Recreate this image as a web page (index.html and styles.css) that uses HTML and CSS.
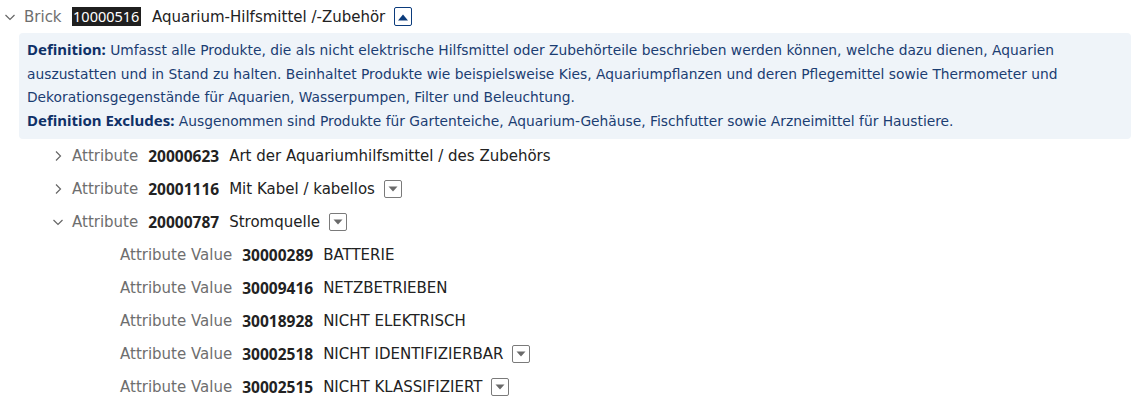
FILE: index.html
```html
<!DOCTYPE html>
<html lang="de">
<head>
<meta charset="utf-8">
<link rel="stylesheet" href="styles.css">
</head>
<body>
<div class="tree">
  <div class="row brick-row">
    <span class="chev"><svg width="12" height="12" viewBox="0 0 12 12"><path d="M1.5 4 L6 8.5 L10.5 4" fill="none" stroke="#666" stroke-width="1.2"/></svg></span>
    <span class="label">Brick</span>
    <mark class="hl">10000516</mark>
    <span class="name">Aquarium-Hilfsmittel /-Zubehör</span>
    <span class="btn btn-up"><svg width="12" height="8" viewBox="0 0 12 8"><path d="M1 7.5 L6 1.5 L11 7.5 Z" fill="#0b3b7c"/></svg></span>
  </div>
  <div class="def">
    <p><b>Definition:</b> Umfasst alle Produkte, die als nicht elektrische Hilfsmittel oder Zubehörteile beschrieben werden können, welche dazu dienen, Aquarien auszustatten und in Stand zu halten. Beinhaltet Produkte wie beispielsweise Kies, Aquariumpflanzen und deren Pflegemittel sowie Thermometer und Dekorationsgegenstände für Aquarien, Wasserpumpen, Filter und Beleuchtung.</p>
    <p><b>Definition Excludes:</b> Ausgenommen sind Produkte für Gartenteiche, Aquarium-Gehäuse, Fischfutter sowie Arzneimittel für Haustiere.</p>
  </div>
  <div class="row attr-row">
    <span class="chev"><svg width="12" height="12" viewBox="0 0 12 12"><path d="M4 1.5 L8.5 6 L4 10.5" fill="none" stroke="#666" stroke-width="1.2"/></svg></span>
    <span class="label">Attribute</span>
    <span class="code">20000623</span>
    <span class="name">Art der Aquariumhilfsmittel / des Zubehörs</span>
  </div>
  <div class="row attr-row">
    <span class="chev"><svg width="12" height="12" viewBox="0 0 12 12"><path d="M4 1.5 L8.5 6 L4 10.5" fill="none" stroke="#666" stroke-width="1.2"/></svg></span>
    <span class="label">Attribute</span>
    <span class="code">20001116</span>
    <span class="name">Mit Kabel / kabellos</span>
    <span class="btn btn-down"><svg width="12" height="8" viewBox="0 0 12 8"><path d="M1.5 1.5 L10.5 1.5 L6 6.5 Z" fill="#6a6a6a"/></svg></span>
  </div>
  <div class="row attr-row">
    <span class="chev"><svg width="12" height="12" viewBox="0 0 12 12"><path d="M1.5 4 L6 8.5 L10.5 4" fill="none" stroke="#666" stroke-width="1.2"/></svg></span>
    <span class="label">Attribute</span>
    <span class="code">20000787</span>
    <span class="name">Stromquelle</span>
    <span class="btn btn-down"><svg width="12" height="8" viewBox="0 0 12 8"><path d="M1.5 1.5 L10.5 1.5 L6 6.5 Z" fill="#6a6a6a"/></svg></span>
  </div>
  <div class="row val-row">
    <span class="label">Attribute Value</span>
    <span class="code">30000289</span>
    <span class="name">BATTERIE</span>
  </div>
  <div class="row val-row">
    <span class="label">Attribute Value</span>
    <span class="code">30009416</span>
    <span class="name">NETZBETRIEBEN</span>
  </div>
  <div class="row val-row">
    <span class="label">Attribute Value</span>
    <span class="code">30018928</span>
    <span class="name">NICHT ELEKTRISCH</span>
  </div>
  <div class="row val-row">
    <span class="label">Attribute Value</span>
    <span class="code">30002518</span>
    <span class="name">NICHT IDENTIFIZIERBAR</span>
    <span class="btn btn-down"><svg width="12" height="8" viewBox="0 0 12 8"><path d="M1.5 1.5 L10.5 1.5 L6 6.5 Z" fill="#6a6a6a"/></svg></span>
  </div>
  <div class="row val-row">
    <span class="label">Attribute Value</span>
    <span class="code">30002515</span>
    <span class="name">NICHT KLASSIFIZIERT</span>
    <span class="btn btn-down"><svg width="12" height="8" viewBox="0 0 12 8"><path d="M1.5 1.5 L10.5 1.5 L6 6.5 Z" fill="#6a6a6a"/></svg></span>
  </div>
</div>
</body>
</html>
```
FILE: styles.css
```css
html, body {
  margin: 0;
  padding: 0;
  background: #ffffff;
}
body {
  font-family: "DejaVu Sans", sans-serif;
  font-size: 15px;
  color: #222222;
}
.tree {
  padding: 0 11px 0 4px;
}
.row {
  display: flex;
  align-items: center;
  height: 33px;
  gap: 10px;
  white-space: nowrap;
}
.chev {
  display: flex;
  align-items: center;
  justify-content: center;
  width: 12px;
  height: 12px;
  margin-right: -2px;
}
.label {
  color: #6e6e6e;
}
.code {
  font-family: "Noto Sans", sans-serif;
  font-size: 15.5px;
  font-weight: bold;
  color: #222222;
}
.hl {
  font-family: "Noto Sans", sans-serif;
  font-size: 14.5px;
  background: #1f1f1f;
  color: #ffffff;
  padding: 0 1.5px;
  line-height: 19px;
  margin-right: 1px;
}
.name {
  color: #222222;
}
.btn {
  display: flex;
  align-items: center;
  justify-content: center;
  box-sizing: border-box;
  width: 18px;
  height: 18px;
  border-radius: 2px;
  background: #ffffff;
  margin-left: -1px;
}
.btn-up {
  border: 1.5px solid #0b3b7c;
  height: 19px;
}
.btn-down {
  border: 1px solid #7a7a7a;
}
.def {
  margin-left: 15px;
  background: #eff4f9;
  border-radius: 4px;
  padding: 6px 8px;
  color: #1b3d72;
  font-size: 13.8px;
  line-height: 23.5px;
}
.def p {
  margin: 0;
}
.def b {
  font-family: "Noto Sans", sans-serif;
  font-size: 15px;
  line-height: 14px;
  color: #0f3168;
}
.attr-row {
  padding-left: 48px;
}
.val-row {
  padding-left: 116px;
}
```
